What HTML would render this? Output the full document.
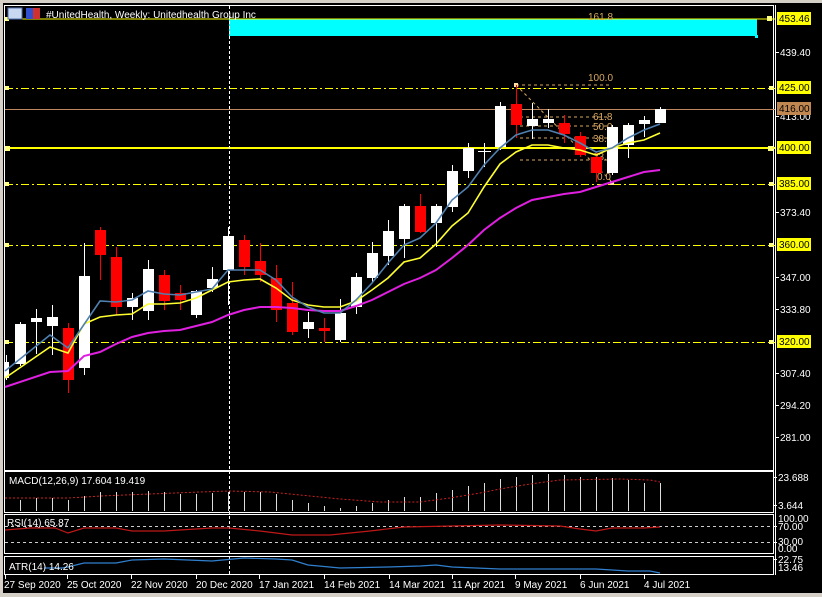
<!DOCTYPE html>
<html><head><meta charset="utf-8"><style>
html,body{margin:0;padding:0;background:#d4d0c8;}
svg{display:block;}
text{font-family:"Liberation Sans",sans-serif;font-size:10px;}
</style></head><body>
<svg width="822" height="597" viewBox="0 0 822 597" xmlns="http://www.w3.org/2000/svg">
<rect x="0" y="0" width="822" height="597" fill="#d4d0c8"/>
<rect x="3" y="3" width="819" height="590" fill="#000"/>
<!-- frames -->
<g fill="none" stroke="#fff" stroke-width="1">
<rect x="4.5" y="5.5" width="769" height="465"/>
<rect x="4.5" y="471.5" width="769" height="41"/>
<rect x="4.5" y="514.5" width="769" height="39"/>
<rect x="4.5" y="556.5" width="769" height="18"/>
</g>
<!-- cyan rect -->
<rect x="229" y="19" width="528" height="17" fill="#00ffff"/>
<rect x="755" y="35" width="3" height="3" fill="#00ffff"/>
<!-- horizontal level lines -->
<line x1="5" y1="19" x2="775" y2="19" stroke="#ffff00" stroke-width="1"/>
<g stroke="#ffff00" stroke-width="1" stroke-dasharray="8,3,2,3">
<line x1="5" y1="88.5" x2="775" y2="88.5"/>
<line x1="5" y1="184.5" x2="775" y2="184.5"/>
<line x1="5" y1="245.5" x2="775" y2="245.5"/>
<line x1="5" y1="342.5" x2="775" y2="342.5"/>
</g>
<line x1="5" y1="109.5" x2="775" y2="109.5" stroke="#c08860" stroke-width="1"/>
<line x1="5" y1="148" x2="775" y2="148" stroke="#ffff00" stroke-width="2"/>
<g fill="#ffff80">
<rect x="5" y="17" width="4" height="4"/><rect x="5" y="86" width="4" height="4"/><rect x="5" y="146" width="5" height="5"/>
<rect x="5" y="182" width="4" height="4"/><rect x="5" y="243" width="4" height="4"/><rect x="5" y="340" width="4" height="4"/>
<rect x="767" y="16" width="5" height="5"/><rect x="769" y="86" width="4" height="4"/><rect x="768" y="146" width="5" height="5"/>
<rect x="769" y="182" width="4" height="4"/><rect x="769" y="243" width="4" height="4"/><rect x="769" y="340" width="4" height="4"/>
</g>
<!-- vertical dashed -->
<line x1="229.5" y1="6" x2="229.5" y2="575" stroke="#fff" stroke-dasharray="3,2"/>
<!-- fib -->
<g stroke="#d8a860" stroke-width="1" stroke-dasharray="3,3" fill="none">
<line x1="516" y1="85" x2="612" y2="182"/>
<line x1="520" y1="117" x2="610" y2="117"/>
<line x1="520" y1="126" x2="610" y2="126"/>
<line x1="520" y1="138" x2="610" y2="138"/>
<line x1="520" y1="160" x2="610" y2="160"/>
<line x1="516" y1="85" x2="612" y2="85"/>
</g>
<g fill="#d8a860">
<text x="588" y="81">100.0</text><text x="593" y="120">61.8</text><text x="593" y="130">50.0</text>
<text x="593" y="142">38.2</text><text x="593" y="160">23.6</text><text x="597" y="180">0.0</text>
<text x="588" y="20">161.8</text>
</g>
<rect x="514" y="83" width="4" height="4" fill="#ffe0a0"/><rect x="562" y="130" width="4" height="4" fill="#ffe0a0"/><rect x="610" y="181" width="4" height="4" fill="#ffe0a0"/>
<!-- candles -->
<g id="c">
<g stroke="#fff" stroke-width="1">
<line x1="6.5" y1="355" x2="6.5" y2="380"/><line x1="20.5" y1="322" x2="20.5" y2="366"/><line x1="36.5" y1="309" x2="36.5" y2="354"/>
<line x1="52.5" y1="305" x2="52.5" y2="355"/><line x1="84.5" y1="243" x2="84.5" y2="375"/><line x1="132.5" y1="293" x2="132.5" y2="320"/>
<line x1="148.5" y1="260" x2="148.5" y2="320"/><line x1="196.5" y1="290" x2="196.5" y2="318"/><line x1="212.5" y1="267" x2="212.5" y2="292"/>
<line x1="228.5" y1="227" x2="228.5" y2="305"/><line x1="308.5" y1="312" x2="308.5" y2="338"/><line x1="340.5" y1="299" x2="340.5" y2="342"/>
<line x1="356.5" y1="273" x2="356.5" y2="314"/><line x1="372.5" y1="242" x2="372.5" y2="282"/><line x1="388.5" y1="220" x2="388.5" y2="265"/>
<line x1="404.5" y1="204" x2="404.5" y2="258"/><line x1="436.5" y1="204" x2="436.5" y2="247"/><line x1="452.5" y1="165" x2="452.5" y2="212"/>
<line x1="468.5" y1="143" x2="468.5" y2="178"/><line x1="484.5" y1="143" x2="484.5" y2="167"/><line x1="478" y1="151.5" x2="491" y2="151.5"/>
<line x1="500.5" y1="102" x2="500.5" y2="150"/><line x1="532.5" y1="103" x2="532.5" y2="139"/><line x1="548.5" y1="109" x2="548.5" y2="128"/>
<line x1="612.5" y1="125" x2="612.5" y2="175"/><line x1="628.5" y1="123" x2="628.5" y2="158"/><line x1="644.5" y1="116" x2="644.5" y2="137"/>
<line x1="660.5" y1="107" x2="660.5" y2="123"/>
</g>
<g fill="#fff">
<rect x="4" y="362" width="5" height="16"/><rect x="15" y="324" width="11" height="40"/><rect x="31" y="318" width="11" height="4"/>
<rect x="47" y="317" width="11" height="9"/><rect x="79" y="276" width="11" height="92"/><rect x="127" y="298" width="11" height="9"/>
<rect x="143" y="269" width="11" height="42"/><rect x="191" y="291" width="11" height="24"/><rect x="207" y="279" width="11" height="9"/>
<rect x="223" y="236" width="11" height="34"/><rect x="303" y="322" width="11" height="7"/><rect x="335" y="313" width="11" height="27"/>
<rect x="351" y="277" width="11" height="30"/><rect x="367" y="253" width="11" height="25"/><rect x="383" y="231" width="11" height="25"/>
<rect x="399" y="206" width="11" height="33"/><rect x="431" y="206" width="11" height="17"/><rect x="447" y="171" width="11" height="36"/>
<rect x="463" y="148" width="11" height="23"/><rect x="495" y="106" width="11" height="41"/><rect x="527" y="119" width="11" height="7"/>
<rect x="543" y="119" width="11" height="4"/><rect x="607" y="127" width="11" height="46"/><rect x="623" y="125" width="11" height="20"/>
<rect x="639" y="120" width="11" height="4"/><rect x="655" y="109" width="11" height="14"/>
</g>
<g stroke="#ff0000" stroke-width="1">
<line x1="68.5" y1="323" x2="68.5" y2="393"/><line x1="100.5" y1="227" x2="100.5" y2="280"/><line x1="116.5" y1="247" x2="116.5" y2="315"/>
<line x1="164.5" y1="270" x2="164.5" y2="310"/><line x1="180.5" y1="285" x2="180.5" y2="310"/><line x1="244.5" y1="235" x2="244.5" y2="275"/>
<line x1="260.5" y1="243" x2="260.5" y2="282"/><line x1="276.5" y1="265" x2="276.5" y2="322"/><line x1="292.5" y1="282" x2="292.5" y2="335"/>
<line x1="324.5" y1="318" x2="324.5" y2="342"/><line x1="420.5" y1="194" x2="420.5" y2="233"/><line x1="516.5" y1="85" x2="516.5" y2="138"/>
<line x1="564.5" y1="115" x2="564.5" y2="143"/><line x1="580.5" y1="132" x2="580.5" y2="157"/><line x1="596.5" y1="152" x2="596.5" y2="182"/>
</g>
<g fill="#ff0000">
<rect x="63" y="328" width="11" height="52"/><rect x="95" y="230" width="11" height="25"/><rect x="111" y="257" width="11" height="50"/>
<rect x="159" y="275" width="11" height="26"/><rect x="175" y="293" width="11" height="7"/><rect x="239" y="240" width="11" height="27"/>
<rect x="255" y="261" width="11" height="14"/><rect x="271" y="278" width="11" height="32"/><rect x="287" y="303" width="11" height="29"/>
<rect x="319" y="328" width="11" height="3"/><rect x="415" y="206" width="11" height="26"/><rect x="511" y="104" width="11" height="21"/>
<rect x="559" y="123" width="11" height="11"/><rect x="575" y="136" width="11" height="19"/><rect x="591" y="157" width="11" height="16"/>
</g>
</g>
<!-- MAs -->
<polyline fill="none" stroke="#e020e0" stroke-width="2" points="5,387 50,372 68,371 84,356 100,352 116,344 132,337 148,333 164,331 180,330 196,326 212,322 228,315 244,310 260,307 276,307 292,308 308,310 324,311 340,311 356,306 372,300 388,292 404,284 420,278 436,270 452,258 468,245 484,230 500,218 516,208 532,200 548,197 564,194 580,192 596,187 612,182 628,177 644,172 660,170"/>
<polyline fill="none" stroke="#ffff30" stroke-width="1.6" points="5,378 50,347 68,353 84,324 100,317 116,315 132,314 148,304 164,304 180,303 196,298 212,290 228,282 244,280 260,279 276,288 292,300 308,305 324,307 340,307 356,301 372,290 388,278 404,262 420,258 436,244 452,226 468,213 484,187 500,164 516,152 532,145 548,145 564,148 580,150 596,155 612,148 628,143 644,140 660,133"/>
<polyline fill="none" stroke="#5080b0" stroke-width="1.6" points="5,371 50,335 68,348 100,301 116,302 132,300 148,291 164,294 180,295 196,292 212,289 228,270 244,270 260,270 276,280 292,297 308,307 324,313 340,313 356,300 372,283 388,263 404,245 420,238 436,223 452,200 468,187 484,165 500,148 516,135 532,130 548,130 564,135 580,143 596,152 612,148 628,138 644,130 660,124"/>
<!-- title -->
<rect x="8" y="8" width="14" height="11" fill="#c8d8f0" stroke="#5070b0"/>
<rect x="26" y="8" width="7" height="11" fill="#3050d0"/><rect x="33" y="8" width="7" height="11" fill="#d03030"/>
<text x="46" y="18" fill="#fff">#UnitedHealth, Weekly:  Unitedhealth Group Inc</text>
<!-- right axis -->
<line x1="775.5" y1="5" x2="775.5" y2="575" stroke="#fff"/>
<g stroke="#fff"><line x1="775" y1="52.5" x2="779" y2="52.5"/><line x1="775" y1="116.5" x2="779" y2="116.5"/><line x1="775" y1="212.5" x2="779" y2="212.5"/><line x1="775" y1="277.5" x2="779" y2="277.5"/><line x1="775" y1="309.5" x2="779" y2="309.5"/><line x1="775" y1="373.5" x2="779" y2="373.5"/><line x1="775" y1="405.5" x2="779" y2="405.5"/><line x1="775" y1="437.5" x2="779" y2="437.5"/>
<line x1="773" y1="477.5" x2="777" y2="477.5"/><line x1="773" y1="505.5" x2="777" y2="505.5"/><line x1="773" y1="526.5" x2="777" y2="526.5"/><line x1="773" y1="542.5" x2="777" y2="542.5"/><line x1="773" y1="559.5" x2="777" y2="559.5"/></g>
<g fill="#fff">
<text x="780" y="56">439.40</text><text x="780" y="120">413.00</text><text x="780" y="216">373.40</text><text x="780" y="281">347.00</text>
<text x="780" y="313">333.80</text><text x="780" y="377">307.40</text><text x="780" y="409">294.20</text><text x="780" y="441">281.00</text>
<text x="778" y="481">23.688</text><text x="778" y="509">3.644</text>
<text x="778" y="522">100.00</text><text x="778" y="530">70.00</text><text x="778" y="545">30.00</text><text x="778" y="552">0.00</text>
<text x="778" y="563">22.75</text><text x="778" y="571">13.46</text>
</g>
<g fill="#ffff00"><rect x="777" y="12" width="34" height="13"/><rect x="777" y="81" width="34" height="13"/><rect x="777" y="141" width="34" height="13"/><rect x="777" y="177" width="34" height="13"/><rect x="777" y="238" width="34" height="13"/><rect x="777" y="335" width="34" height="13"/></g>
<rect x="777" y="102" width="34" height="13" fill="#c08850"/>
<g fill="#000"><text x="779" y="22">453.46</text><text x="779" y="91">425.00</text><text x="779" y="151">400.00</text><text x="779" y="187">385.00</text><text x="779" y="248">360.00</text><text x="779" y="345">320.00</text><text x="779" y="112">416.00</text></g>
<!-- MACD -->
<g stroke="#ddd" stroke-width="1">
<line x1="20.5" y1="511" x2="20.5" y2="500"/><line x1="36.5" y1="511" x2="36.5" y2="498"/><line x1="52.5" y1="511" x2="52.5" y2="498"/><line x1="68.5" y1="511" x2="68.5" y2="500"/><line x1="84.5" y1="511" x2="84.5" y2="496"/><line x1="100.5" y1="511" x2="100.5" y2="492"/><line x1="116.5" y1="511" x2="116.5" y2="492"/><line x1="132.5" y1="511" x2="132.5" y2="492"/><line x1="148.5" y1="511" x2="148.5" y2="491"/><line x1="164.5" y1="511" x2="164.5" y2="492"/><line x1="180.5" y1="511" x2="180.5" y2="494"/><line x1="196.5" y1="511" x2="196.5" y2="494"/><line x1="212.5" y1="511" x2="212.5" y2="493"/><line x1="228.5" y1="511" x2="228.5" y2="492"/><line x1="244.5" y1="511" x2="244.5" y2="492"/><line x1="260.5" y1="511" x2="260.5" y2="492"/><line x1="276.5" y1="511" x2="276.5" y2="494"/><line x1="292.5" y1="511" x2="292.5" y2="500"/><line x1="308.5" y1="511" x2="308.5" y2="503"/><line x1="324.5" y1="511" x2="324.5" y2="506"/><line x1="340.5" y1="511" x2="340.5" y2="508"/><line x1="356.5" y1="511" x2="356.5" y2="506"/><line x1="372.5" y1="511" x2="372.5" y2="503"/><line x1="388.5" y1="511" x2="388.5" y2="500"/><line x1="404.5" y1="511" x2="404.5" y2="497"/><line x1="420.5" y1="511" x2="420.5" y2="497"/><line x1="436.5" y1="511" x2="436.5" y2="493"/><line x1="452.5" y1="511" x2="452.5" y2="490"/><line x1="468.5" y1="511" x2="468.5" y2="486"/><line x1="484.5" y1="511" x2="484.5" y2="483"/><line x1="500.5" y1="511" x2="500.5" y2="479"/><line x1="516.5" y1="511" x2="516.5" y2="477"/><line x1="532.5" y1="511" x2="532.5" y2="475"/><line x1="548.5" y1="511" x2="548.5" y2="474"/><line x1="564.5" y1="511" x2="564.5" y2="475"/><line x1="580.5" y1="511" x2="580.5" y2="477"/><line x1="596.5" y1="511" x2="596.5" y2="477"/><line x1="612.5" y1="511" x2="612.5" y2="478"/><line x1="628.5" y1="511" x2="628.5" y2="480"/><line x1="644.5" y1="511" x2="644.5" y2="483"/><line x1="660.5" y1="511" x2="660.5" y2="483"/>
</g>
<polyline fill="none" stroke="#d02020" stroke-dasharray="2,2" points="5,498 68,498 100,496 150,494 200,492 229,491 270,492 300,495 340,499 380,502 420,502 450,498 480,493 500,489 530,484 560,480 620,479 650,480 660,482"/>
<text x="9" y="484" fill="#fff">MACD(12,26,9) 17.604 19.419</text>
<!-- RSI -->
<g stroke="#ccc" stroke-dasharray="3,3"><line x1="5" y1="526.5" x2="773" y2="526.5"/><line x1="5" y1="542.5" x2="773" y2="542.5"/></g>
<polyline fill="none" stroke="#c01818" stroke-width="1.2" points="5,530 30,528 55,528 68,533 84,528 116,528 132,531 164,531 212,528 229,528 260,531 292,535 330,535 370,531 404,527 452,526 500,525 560,526 580,529 596,531 612,528 644,528 660,527"/>
<text x="7" y="526" fill="#fff">RSI(14) 65.87</text>
<!-- ATR -->
<polyline fill="none" stroke="#3080d0" stroke-width="1.2" points="44,568 62,568 68,567 84,563 116,563 132,560 164,559 212,561 244,558 276,559 292,560 308,565 340,568 388,567 420,566 436,565 452,567 500,569 564,569 596,569 628,571 650,571 660,573"/>
<text x="9" y="570" fill="#fff">ATR(14) 14.26</text>
<!-- dates -->
<g stroke="#fff"><line x1="5.5" y1="575" x2="5.5" y2="579"/><line x1="67.5" y1="575" x2="67.5" y2="579"/><line x1="131.5" y1="575" x2="131.5" y2="579"/><line x1="196.5" y1="575" x2="196.5" y2="579"/><line x1="259.5" y1="575" x2="259.5" y2="579"/><line x1="324.5" y1="575" x2="324.5" y2="579"/><line x1="389.5" y1="575" x2="389.5" y2="579"/><line x1="452.5" y1="575" x2="452.5" y2="579"/><line x1="515.5" y1="575" x2="515.5" y2="579"/><line x1="580.5" y1="575" x2="580.5" y2="579"/><line x1="644.5" y1="575" x2="644.5" y2="579"/></g>
<g fill="#fff">
<text x="4" y="588">27 Sep 2020</text><text x="67" y="588">25 Oct 2020</text><text x="131" y="588">22 Nov 2020</text><text x="196" y="588">20 Dec 2020</text>
<text x="259" y="588">17 Jan 2021</text><text x="324" y="588">14 Feb 2021</text><text x="389" y="588">14 Mar 2021</text><text x="452" y="588">11 Apr 2021</text>
<text x="515" y="588">9 May 2021</text><text x="580" y="588">6 Jun 2021</text><text x="644" y="588">4 Jul 2021</text>
</g>
</svg>
</body></html>
